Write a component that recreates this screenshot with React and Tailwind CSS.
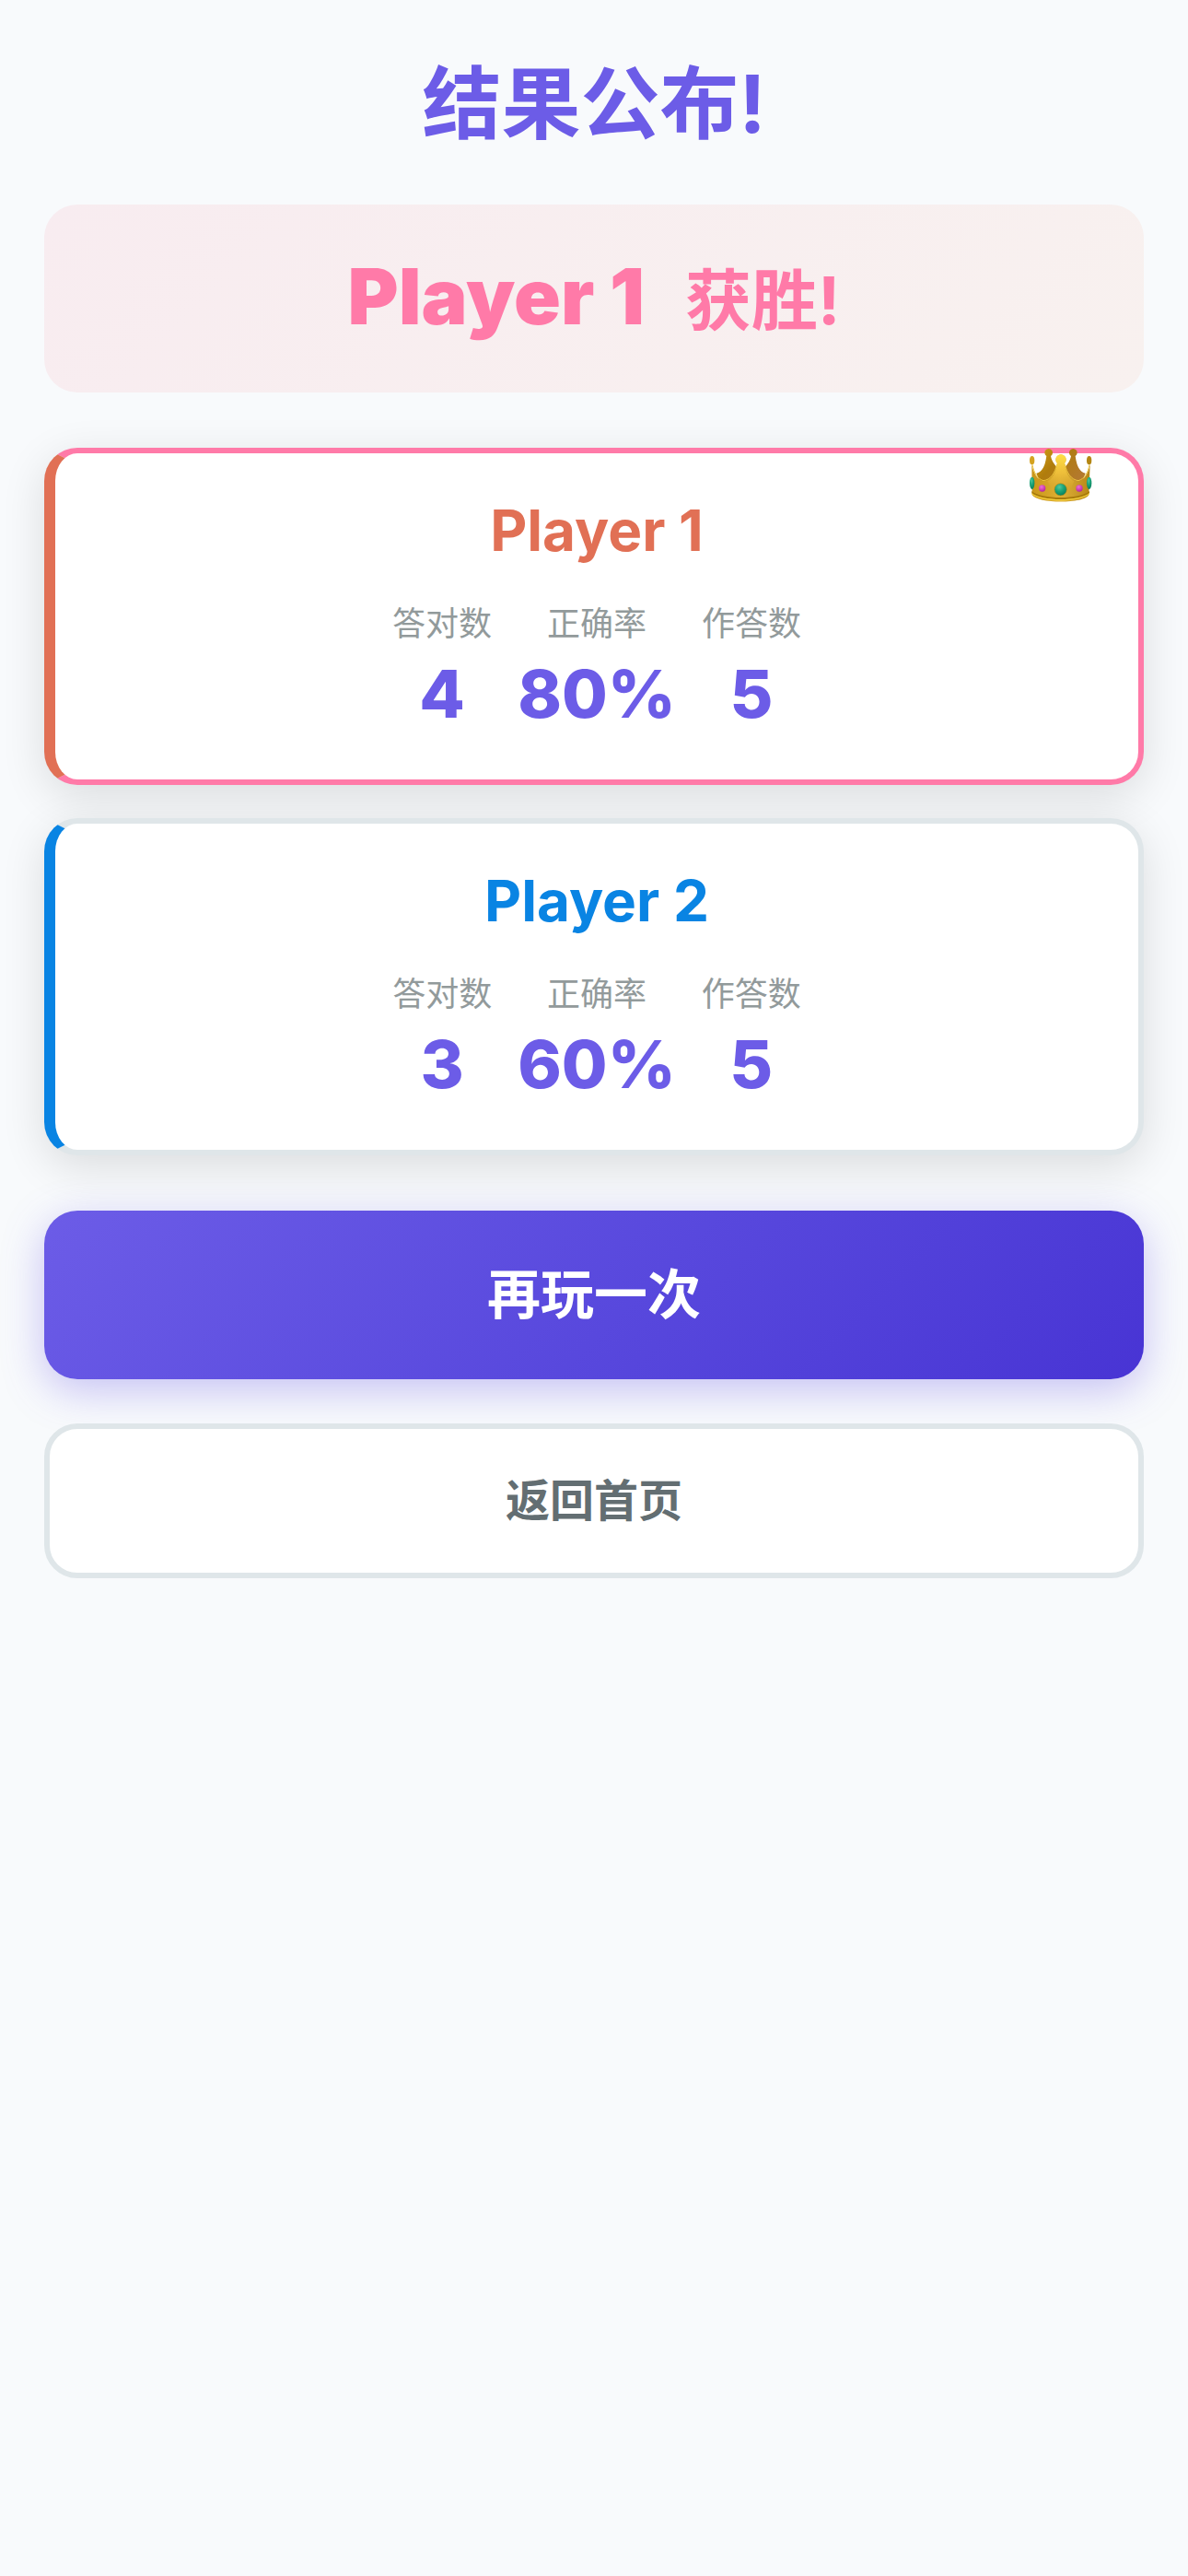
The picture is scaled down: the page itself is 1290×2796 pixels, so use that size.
const players = [
  {
    name: 'Player 1',
    correct: 4,
    accuracy: '80%',
    answered: 5,
    winner: true,
    card: 'border-[#ff7aa8] border-l-[#e17055]',
    title: 'text-[#e17055]',
  },
  {
    name: 'Player 2',
    correct: 3,
    accuracy: '60%',
    answered: 5,
    winner: false,
    card: 'border-[#dfe6e9] border-l-[#0984e3]',
    title: 'text-[#0984e3]',
  },
];

const Crown = () => (
  <svg viewBox="0 0 204 176" className="w-[68px]" role="img" aria-label="crown">
    <defs>
      <linearGradient id="gold" x1="0" x2="1" y1="0" y2="0">
        <stop offset="0" stopColor="#c9961a" />
        <stop offset="0.25" stopColor="#d3a326" />
        <stop offset="0.5" stopColor="#e0b034" />
        <stop offset="0.78" stopColor="#c99a28" />
        <stop offset="1" stopColor="#b98613" />
      </linearGradient>
      <linearGradient id="front" x1="0" x2="0" y1="0" y2="1">
        <stop offset="0" stopColor="#ffdf45" />
        <stop offset="0.5" stopColor="#f2c23c" stopOpacity="0.8" />
        <stop offset="1" stopColor="#d3a42e" stopOpacity="0" />
      </linearGradient>
      <linearGradient id="back" x1="0" x2="1" y1="0" y2="0.6">
        <stop offset="0" stopColor="#d3a016" />
        <stop offset="0.45" stopColor="#b07c0c" />
        <stop offset="1" stopColor="#b3792d" />
      </linearGradient>
      <radialGradient id="green" cx="0.4" cy="0.3" r="0.7">
        <stop offset="0" stopColor="#4fc79c" />
        <stop offset="0.5" stopColor="#1ba479" />
        <stop offset="1" stopColor="#0a805c" />
      </radialGradient>
      <radialGradient id="pink" cx="0.4" cy="0.3" r="0.7">
        <stop offset="0" stopColor="#ee70d5" />
        <stop offset="1" stopColor="#b8259d" />
      </radialGradient>
    </defs>
    <path
      d="M22 80C42 76 51 54 55 24A13 13 0 1 1 69 24C73 44 86 58 102 74C118 58 131 44 135 24A13 13 0 1 1 149 24C153 54 162 76 182 80L170 112H34Z"
      fill="url(#back)"
    />
    <path
      d="M7 50C12 75 22 100 44 106C68 106 86 78 90 48A17 17 0 1 1 114 48C118 78 136 106 160 106C182 100 192 75 197 50L193 150C180 180 24 180 8 150Z"
      fill="url(#gold)"
    />
    <path d="M90 48A17 17 0 1 1 114 48C118 78 128 98 145 106L130 140H74L59 106C76 98 86 78 90 48Z" fill="url(#front)" />
    <path
      d="M9 52C14 77 24 98 45 104C68 102 84 78 89 50M195 52C190 77 180 98 159 104C136 102 120 78 115 50"
      fill="none"
      stroke="#efc83e"
      strokeWidth="3"
    />
    <ellipse cx="8" cy="38" rx="8" ry="14" fill="#d4a220" />
    <ellipse cx="194" cy="38" rx="8" ry="14" fill="#b48613" />
    <path d="M7 138C36 166 165 166 195 138V145C165 172 36 172 7 145Z" fill="#a77a0b" />
    <path d="M7 144C36 172 165 172 195 144V148C165 176 36 176 7 148Z" fill="#f3d03d" />
    <ellipse cx="8" cy="112" rx="8" ry="20" fill="url(#green)" />
    <ellipse cx="194" cy="112" rx="8" ry="20" fill="url(#green)" />
    <circle cx="101" cy="133" r="20" fill="url(#green)" stroke="#bd8d16" strokeWidth="2" />
    <circle cx="41" cy="129" r="11" fill="url(#pink)" />
    <circle cx="162" cy="129" r="11" fill="url(#pink)" />
  </svg>
);

const Stat = ({ label, value }) => (
  <div className="flex flex-col items-center">
    <dt className="text-4xl leading-[54px] text-[#929a9b]">{label}</dt>
    <dd className="text-7xl leading-[98px] font-extrabold text-[#6c5ce7]">{value}</dd>
  </div>
);

const PlayerCard = ({ player }) => (
  <section
    className={`relative rounded-[36px] border-6 border-l-12 bg-white px-12 pt-12 pb-11 text-center shadow-[0_12px_48px_rgba(0,0,0,0.12)] ${player.card}`}
  >
    {player.winner && (
      <div className="absolute -top-[5px] right-[50px]">
        <Crown />
      </div>
    )}
    <h2 className={`mb-[38px] text-[62px] leading-[72px] font-bold ${player.title}`}>{player.name}</h2>
    <dl className="flex justify-center gap-7">
      <Stat label="答对数" value={player.correct} />
      <Stat label="正确率" value={player.accuracy} />
      <Stat label="作答数" value={player.answered} />
    </dl>
  </section>
);

const App = () => {
  const winner = players.find((player) => player.winner);

  return (
    <main
      lang="zh-CN"
      className="min-h-screen bg-[#f8fafc] px-12 pt-[50px] pb-12 font-['Inter','Noto_Sans_CJK_SC',sans-serif]"
    >
      <h1 className="mb-[46px] text-center text-[86px] leading-[126px] font-bold text-[#6c5ce7]">结果公布!</h1>

      <div className="mb-15 flex items-baseline justify-center gap-11 rounded-[36px] bg-linear-135 from-[#f8ecf0] to-[#f8f1ef] py-12 text-7xl leading-[108px] font-bold text-[#ff7aa8]">
        <strong className="text-[84px] leading-[104px] font-black">{winner.name}</strong>
        <span className="leading-[104px]">获胜!</span>
      </div>

      <div className="mb-15 flex flex-col gap-9">
        {players.map((player) => (
          <PlayerCard key={player.name} player={player} />
        ))}
      </div>

      <div className="flex flex-col gap-12">
        <button
          type="button"
          className="w-full rounded-[36px] bg-linear-135 from-[#6c5ce7] to-[#4834d4] py-12 text-[58px] leading-[87px] font-bold text-white shadow-[0_12px_45px_rgba(108,92,231,0.36)]"
        >
          再玩一次
        </button>
        <button
          type="button"
          className="w-full rounded-[36px] border-6 border-[#dfe6e9] bg-white py-[42px] text-5xl leading-[72px] font-bold text-[#636e72]"
        >
          返回首页
        </button>
      </div>
    </main>
  );
};

export default App;
